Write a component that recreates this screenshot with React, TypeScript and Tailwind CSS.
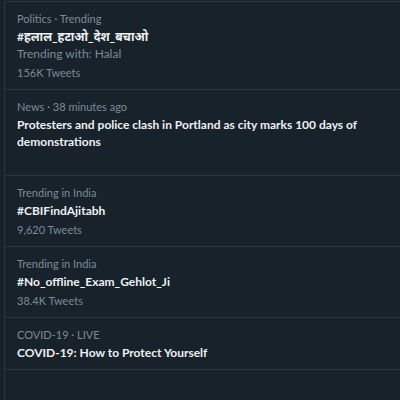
import React from "react";

type Item = {
  meta: string;
  title: string;
  sub?: string;
  count?: string;
  tall?: boolean;
};

const items: Item[] = [
  {
    meta: "Politics · Trending",
    title: "#हलाल_हटाओ_देश_बचाओ",
    sub: "Trending with: Halal",
    count: "156K Tweets",
  },
  {
    meta: "News · 38 minutes ago",
    title:
      "Protesters and police clash in Portland as city marks 100 days of demonstrations",
    tall: true,
  },
  { meta: "Trending in India", title: "#CBIFindAjitabh", count: "9,620 Tweets" },
  {
    meta: "Trending in India",
    title: "#No_offline_Exam_Gehlot_Ji",
    count: "38.4K Tweets",
  },
  { meta: "COVID-19 · LIVE", title: "COVID-19: How to Protect Yourself" },
];

const App = () => {
  return (
    <div
      className="w-[400px] h-[400px] overflow-hidden bg-[#17222b] pt-px pl-1"
      style={{ fontFamily: 'Lato, "Noto Sans Devanagari", "Noto Sans", sans-serif' }}
    >
      <div className="h-full border-l border-t border-[#2a3640]">
        {items.map((item, i) => (
          <div
            key={i}
            className={
              "border-b border-[#2a3640] pl-3 pr-4 pt-[9px] pb-[8px] " +
              (item.tall ? "min-h-[86px]" : "")
            }
          >
            <div className="text-[11px] leading-[16px] text-[#7d8b96]">{item.meta}</div>
            <div className="mt-px text-[12px] leading-[17px] font-bold text-[#eef0f2]">
              {item.title}
            </div>
            {item.sub && (
              <div className="mt-px text-[12px] leading-[16px] text-[#7d8b96]">{item.sub}</div>
            )}
            {item.count && (
              <div className="mt-[3px] text-[11px] leading-[16px] text-[#7d8b96]">{item.count}</div>
            )}
          </div>
        ))}
      </div>
    </div>
  );
};

export default App;
